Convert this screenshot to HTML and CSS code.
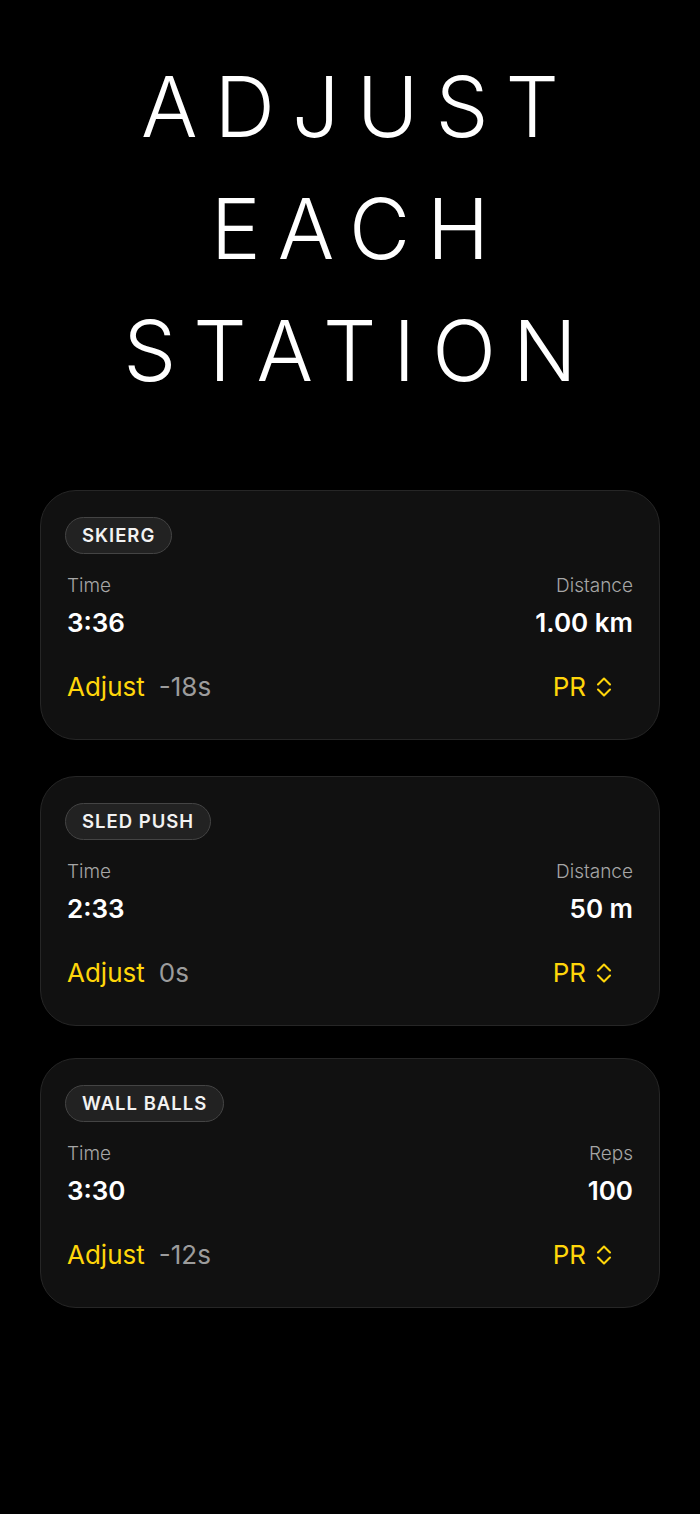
FILE: index.html
```html
<!DOCTYPE html>
<html lang="en">
<head>
<meta charset="utf-8">
<title>Adjust Each Station</title>
<link rel="stylesheet" href="styles.css">
</head>
<body>
<main class="screen">
  <h1 class="title"><span>ADJUST</span><span>EACH</span><span>STATION</span></h1>

  <section class="cards">
    <article class="card">
      <div class="badge">SKIERG</div>
      <div class="stats">
        <div class="stat">
          <div class="label">Time</div>
          <div class="value">3:36</div>
        </div>
        <div class="stat right">
          <div class="label">Distance</div>
          <div class="value">1.00 km</div>
        </div>
      </div>
      <div class="adjust-row">
        <div class="adjust"><span class="adjust-label">Adjust</span><span class="delta">-18s</span></div>
        <div class="picker"><span>PR</span>
          <svg class="chev" viewBox="0 0 16 22" aria-hidden="true"><path d="M2 8.5 L8 2.5 L14 8.5 M2 13.5 L8 19.5 L14 13.5" fill="none" stroke="currentColor" stroke-width="2.1" stroke-linecap="round" stroke-linejoin="round"/></svg>
        </div>
      </div>
    </article>

    <article class="card">
      <div class="badge">SLED PUSH</div>
      <div class="stats">
        <div class="stat">
          <div class="label">Time</div>
          <div class="value">2:33</div>
        </div>
        <div class="stat right">
          <div class="label">Distance</div>
          <div class="value">50 m</div>
        </div>
      </div>
      <div class="adjust-row">
        <div class="adjust"><span class="adjust-label">Adjust</span><span class="delta">0s</span></div>
        <div class="picker"><span>PR</span>
          <svg class="chev" viewBox="0 0 16 22" aria-hidden="true"><path d="M2 8.5 L8 2.5 L14 8.5 M2 13.5 L8 19.5 L14 13.5" fill="none" stroke="currentColor" stroke-width="2.1" stroke-linecap="round" stroke-linejoin="round"/></svg>
        </div>
      </div>
    </article>

    <article class="card">
      <div class="badge">WALL BALLS</div>
      <div class="stats">
        <div class="stat">
          <div class="label">Time</div>
          <div class="value">3:30</div>
        </div>
        <div class="stat right">
          <div class="label">Reps</div>
          <div class="value">100</div>
        </div>
      </div>
      <div class="adjust-row">
        <div class="adjust"><span class="adjust-label">Adjust</span><span class="delta">-12s</span></div>
        <div class="picker"><span>PR</span>
          <svg class="chev" viewBox="0 0 16 22" aria-hidden="true"><path d="M2 8.5 L8 2.5 L14 8.5 M2 13.5 L8 19.5 L14 13.5" fill="none" stroke="currentColor" stroke-width="2.1" stroke-linecap="round" stroke-linejoin="round"/></svg>
        </div>
      </div>
    </article>
  </section>
</main>
</body>
</html>
```

FILE: styles.css
```css
* { box-sizing: border-box; }

html, body {
  margin: 0;
  padding: 0;
  background: #000;
}

body {
  font-family: Inter, "Noto Sans", "Liberation Sans", sans-serif;
  color: #fff;
  width: 700px;
  min-height: 1514px;
}

.screen {
  padding: 46px 40px 0;
}

.title {
  margin: 0;
  display: flex;
  flex-direction: column;
  align-items: center;
  font-size: 84px;
  line-height: 122px;
  font-weight: 300;
  letter-spacing: 17px;
  padding-left: 17px;
  color: #fff;
}

.cards {
  margin-top: 78px;
  display: flex;
  flex-direction: column;
  gap: 32px;
}

.cards .card:first-child {
  margin-bottom: 4px;
}

.card {
  height: 250px;
  background: #111111;
  border: 1px solid #262626;
  border-radius: 36px;
  padding: 26px 26px 0;
}

.badge {
  display: inline-block;
  height: 37px;
  line-height: 35px;
  margin-left: -2px;
  padding: 0 16px;
  border: 1px solid #444444;
  border-radius: 19px;
  background: #222222;
  font-size: 18.5px;
  font-weight: 600;
  letter-spacing: 1px;
  color: #f2f2f2;
}

.stats {
  display: flex;
  justify-content: space-between;
  margin-top: 21px;
}

.stat.right {
  text-align: right;
}

.label {
  font-size: 19px;
  line-height: 22px;
  font-weight: 300;
  color: #a6a6a6;
}

.value {
  margin-top: 11px;
  font-size: 26px;
  line-height: 30px;
  font-weight: 600;
  color: #fff;
}

.adjust-row {
  display: flex;
  justify-content: space-between;
  align-items: center;
  margin-top: 33px;
  font-size: 26px;
  line-height: 32px;
}

.adjust {
  display: flex;
  gap: 14px;
}

.adjust-label {
  color: #ffd60a;
}

.delta {
  color: #9c9c9c;
}

.picker {
  display: flex;
  align-items: center;
  gap: 10px;
  margin-right: 21px;
  color: #ffd60a;
}

.chev {
  display: block;
  flex: none;
  width: 16px;
  height: 22px;
}
```
